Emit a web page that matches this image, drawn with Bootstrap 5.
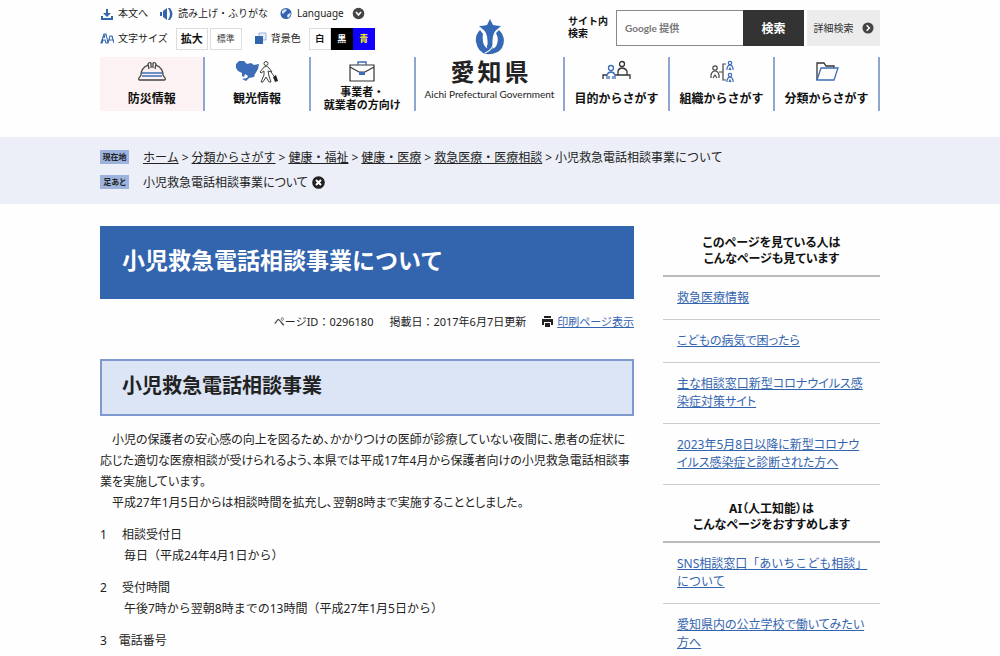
<!DOCTYPE html>
<html lang="ja">
<head>
<meta charset="utf-8">
<meta name="viewport" content="width=device-width, initial-scale=1">
<title>小児救急電話相談事業について - 愛知県</title>
<link href="https://cdn.jsdelivr.net/npm/bootstrap@5.3.0/dist/css/bootstrap.min.css" rel="stylesheet">
<script src="https://cdn.jsdelivr.net/npm/bootstrap@5.3.0/dist/js/bootstrap.bundle.min.js" defer></script>
<style>
:root{--ai:#3364ae;--line:#8fa6d2;--ink:#222}
body{font-family:"Noto Sans","Noto Sans CJK JP",sans-serif;font-size:12px;line-height:21px;color:var(--ink);background:#fefefe}
.wrap{width:100%;max-width:824px;padding:0 32px 0 12px;margin:0 auto}
a{color:inherit}
svg{flex:none;display:block}
.site-head{display:grid;grid-template-columns:316px 1fr 317px;min-height:137px}
.tools{height:57px;padding-top:3px;white-space:nowrap;font-size:10px}
.tools .line-a{height:21px}
.tools .line-b{height:29px}
.tools a{text-decoration:none}
.apart{margin-left:12px}
.size-btn{border:1px solid #ddd;background:#fff;height:22px;width:32px;padding:0;line-height:18px;font-size:9px;color:#444}
.size-btn.big{font-size:11px;font-weight:700;color:#111;margin-right:2px}
.tone{height:22px;width:22px;padding:0;border:1px solid #ddd;background:#fff;font-size:9px;line-height:18px;font-weight:700;color:#111}
.tone.black{background:#000;color:#fff;border-color:#000}
.tone.blue{background:#10f;color:#ff0;border-color:#10f}
.gnav{display:grid;grid-template-columns:repeat(3,1fr);height:54px;font-size:12px;font-weight:700;line-height:12px;color:#111}
.gnav a{text-decoration:none;border-right:2px solid var(--line);display:flex;flex-direction:column;align-items:center;justify-content:space-between;padding:3px 0 6px;white-space:nowrap;text-align:center}
.gnav a.two{padding-bottom:0;font-size:11px;line-height:13px}
.gnav a.hot{background:#fdf2f3}
.gnav.right{border-left:2px solid var(--line)}
.brand{text-decoration:none;padding-top:18px;display:flex;flex-direction:column;align-items:center;white-space:nowrap}
.brand .kanji{font-size:24px;font-weight:700;line-height:32px;display:flex;gap:3px}
.brand .latin{font-size:10px;line-height:13px;font-family:Lato,"Noto Sans",sans-serif}
.search{height:57px;padding:10px 0 11px 5px;white-space:nowrap}
.search label{font-size:10px;line-height:12px;font-weight:700;width:48px;color:#111;padding-top:5px}
.search input{border:1px solid #888;border-right:0;border-radius:0;font-size:10px;padding:0 8px;width:127px;height:36px;background:#fefefe}
.search input::placeholder{color:#777;font-family:Lato,"Noto Sans CJK JP",sans-serif;font-weight:700;opacity:1}
.search button{border:0;background:#333;color:#fff;font-weight:700;font-size:12px;width:61px;height:36px;padding:0}
.detail{background:#ececec;width:73px;height:36px;margin-left:3px;font-size:10px;text-decoration:none;color:#333}
.trail{background:#eceff7;padding:8px 0 10px;white-space:nowrap}
.trail .rowline{display:flex;align-items:center;height:24px}
.trail .rowline+.rowline{margin-top:1px;font-feature-settings:"palt"}
.crumbs{display:flex;gap:3px}
.tag{background:#9db3de;font-size:8px;line-height:14px;font-weight:700;width:29px;text-align:center;margin-right:14px;flex:none}
.cols{display:grid;grid-template-columns:minmax(0,1fr) 217px;column-gap:29px;padding-top:22px}
h1{background:var(--ai);color:#fff;font-size:23px;font-weight:700;line-height:27px;padding:21px 22px 25px;margin:0}
.meta{padding:12px 0;white-space:nowrap;font-size:11px}
.lk{color:var(--ai)}
h2{background:#dce5f5;border:2px solid #7f99cc;color:#222;font-size:20px;font-weight:700;line-height:24px;padding:13px 20px 16px;margin:15px 0 13px}
.text p{margin:0 0 11px;white-space:nowrap}
.text p.lead-in{font-feature-settings:"palt"}
.side h3{font-size:12px;line-height:16px;font-weight:700;text-align:center;padding:9px 0 8px;border-bottom:2px solid #bbb;margin:0;color:#111;font-feature-settings:"palt"}
.side ul{margin:0;font-feature-settings:"palt"}
.side li{border-bottom:1px solid #ccc;padding:12px 0 12px 14px;line-height:18px;white-space:nowrap}
.side li.full{font-feature-settings:normal}
.side ul+h3{margin-top:7px}
</style>
</head>
<body>
<header class="wrap site-head">
  <div>
    <div class="tools">
      <div class="line-a d-flex align-items-center">
        <svg class="me-1" width="14" height="14" viewBox="0 0 14 14" fill="#3364ae"><path d="M6 2h2v4h3L7 10 3 6h3zM1 9h2v2h8V9h2v4H1z"/></svg>
        <a href="#main">本文へ</a>
        <svg class="apart me-1" width="14" height="14" viewBox="0 0 14 14" fill="#3364ae"><path d="M0 5h2v4H0zM3 4l4-3v12l-4-3z"/><path d="M8 1h2q5 6 0 12H8q4-6 0-12z"/></svg>
        <a href="#">読み上げ・ふりがな</a>
        <svg class="apart me-1" width="13" height="13" viewBox="0 0 13 13"><circle cx="6" cy="6.500" r="5.500" fill="#3364ae"/><path d="M2 4l3-2 2 1-2 2-2 2-1-1zM8 7l3-1-1 3-2 2-1-2z" fill="#dbe5f6"/></svg>
        <a href="#">Language</a>
        <svg class="ms-2" width="13" height="13" viewBox="0 0 13 13"><circle cx="6.500" cy="6.500" r="5.800" fill="#444"/><path d="M4 5l2.500 3L9 5" fill="none" stroke="#fff" stroke-width="1.600"/></svg>
      </div>
      <div class="line-b d-flex align-items-center">
        <svg class="me-1" width="14" height="13" viewBox="0 0 14 13" fill="none" stroke="#3364ae" stroke-width="1.100"><path d="M1 11L4 2h2l2 9H6L5 8H3l-1 3zM8 11l2-7h2l2 7M9 8h4M4 6l1-3"/></svg>
        <span>文字サイズ</span>
        <button class="size-btn big ms-2">拡大</button>
        <button class="size-btn">標準</button>
        <svg class="apart me-1" width="13" height="13" viewBox="0 0 13 13"><path d="M5 1h7v7H5z" fill="#e8eefa" stroke="#9db3de"/><path d="M1 4h8v8H1z" fill="#3364ae"/></svg>
        <span>背景色</span>
        <button class="tone ms-2">白</button><button class="tone black">黒</button><button class="tone blue">青</button>
      </div>
    </div>
    <nav class="gnav">
      <a class="hot" href="#"><svg width="30" height="22" viewBox="0 0 30 22" fill="none" stroke="#444" stroke-width="1.300"><path d="M11 5Q4 8 4 15l-2 3q-1 2 1 2h24q2 0 1-2l-2-3q0-7-7-10M12 9L11 4q1-2 3-1v5M18 9l1-5q-1-2-3-1v5"/><path d="M5 13h20M5 16h20" stroke="#3d6cb8"/></svg>防災情報</a>
      <a href="#"><svg width="44" height="24" viewBox="0 0 44 24"><path d="M1 4L4 1 9 1 12 4 16 3 19 5 24 4 23 9 20 14 19 17 14 18 11 21 7 19 12 18 13 16 10 14 9 17 7 16 7 13 3 11 1 8z" fill="#3d6cb8"/><g fill="none" stroke="#444"><circle cx="31" cy="3.500" r="2"/><path d="M29 7Q32 5 34 8L37 12 33 11 34 16 36 22H34L31 17 28 22H26L29 15V11L26 13 25 12zM36 12L39 16"/></g><path d="M38 17l3-2 2 6-3 1z" fill="#222"/></svg>観光情報</a>
      <a class="two" href="#"><svg width="28" height="23" viewBox="0 0 28 23" fill="none" stroke="#333" stroke-width="1.200"><path d="M2 5h24v16H2zM2 7l9 5h6l9-5"/><path d="M10 5V2h8v3" stroke="#3d6cb8" stroke-width="1.400"/><path d="M11 12h6v3h-6z" fill="#3d6cb8" stroke="none"/></svg><span>事業者・<br>就業者の方向け</span></a>
    </nav>
  </div>
  <a class="brand" href="#">
    <svg width="32" height="38" viewBox="0 0 32 38"><path d="M16 1l3 6q5 1 8 1-7 5-8 14v7q0 4-6 6 1-3 0-6v-7Q12 13 5 8q4 0 8-1z" fill="#3569b5"/><path d="M6 12q-5 5-4 12 2 10 10 12 11 1 16-6 5-10-3-18l-3 3q3 6 1 11-1 4-5 5-5 1-8-4-2-5-1-11z" fill="#3569b5"/><path d="M9 12q4 4 4 11v4M23 12q-4 4-4 11v4q-1 5-8 8" fill="none" stroke="#fff" stroke-width="1.100"/></svg>
    <span class="kanji"><span>愛</span><span>知</span><span>県</span></span>
    <span class="latin">Aichi Prefectural Government</span>
  </a>
  <div>
    <form class="search d-flex">
      <label for="q">サイト内<br>検索</label>
      <input id="q" type="text" placeholder="Google 提供">
      <button type="submit">検索</button>
      <a class="detail d-flex align-items-center justify-content-center gap-2" href="#">詳細検索
        <svg width="12" height="12" viewBox="0 0 13 13"><circle cx="6.500" cy="6.500" r="6" fill="#444"/><path d="M5 3.500l3 3-3 3" fill="none" stroke="#fff" stroke-width="1.600"/></svg></a>
    </form>
    <nav class="gnav right">
      <a href="#"><svg width="30" height="22" viewBox="0 0 30 22" fill="none" stroke="#333" stroke-width="1.300"><circle cx="20" cy="4" r="2.500"/><path d="M16 15v-4q1-3 4-3t5 3v4M1 19v-4h4M13 15h15v4"/><g stroke="#3d6cb8"><circle cx="9" cy="8" r="2.500"/><path d="M5 19v-4q1-3 4-3t4 3v4M7 19v-3M11 19v-3"/></g></svg>目的からさがす</a>
      <a href="#"><svg width="26" height="24" viewBox="0 0 26 24" fill="none" stroke="#444" stroke-width="1.200"><circle cx="6" cy="8" r="2.200"/><path d="M2 18v-3q1-4 4-4t4 4v3M4 18l2-3 2 3M10 12h4M17 4h-3v16h3"/><g stroke="#3d6cb8"><circle cx="21" cy="3" r="1.700"/><path d="M18 10V8q1-3 3-3t3 3v2M20 10l1-2 1 2"/><circle cx="21" cy="15" r="1.700"/><path d="M18 22v-2q1-3 3-3t3 3v2M20 22l1-2 1 2"/></g></svg>組織からさがす</a>
      <a href="#"><svg width="24" height="23" viewBox="0 0 24 23" fill="none" stroke="#333" stroke-width="1.300"><path d="M2 20V3h7l2 3h8v2"/><path d="M2 20L6 8h17l-4 12z" stroke="#3d6cb8"/></svg>分類からさがす</a>
    </nav>
  </div>
</header>

<div class="trail">
  <div class="wrap">
    <nav class="rowline"><span class="tag">現在地</span><div class="crumbs"><a href="#">ホーム</a><span>&gt;</span><a href="#">分類からさがす</a><span>&gt;</span><a href="#">健康・福祉</a><span>&gt;</span><a href="#">健康・医療</a><span>&gt;</span><a href="#">救急医療・医療相談</a><span>&gt;</span><span>小児救急電話相談事業について</span></div></nav>
    <div class="rowline"><span class="tag">足あと</span><span>小児救急電話相談事業について</span>
      <button class="btn p-0 border-0 ms-1" aria-label="削除"><svg width="13" height="13" viewBox="0 0 13 13"><circle cx="6.500" cy="6.500" r="6.300" fill="#222"/><path d="M4 4l5 5M9 4L4 9" stroke="#fff" stroke-width="2"/></svg></button></div>
  </div>
</div>

<div class="wrap cols">
  <main id="main">
    <h1>小児救急電話相談事業について</h1>
    <div class="meta d-flex justify-content-end align-items-center"><span>ページID：0296180</span><span class="ms-3">掲載日：2017年6月7日更新</span>
      <svg class="ms-3 me-1" width="11" height="11" viewBox="0 0 11 11" fill="#222"><path d="M2 0h7v2H2zM0 3h11v6H9V6H2v3H0zM3 7h5v4H3z"/></svg><a class="lk" href="#">印刷ページ表示</a></div>
    <h2>小児救急電話相談事業</h2>
    <div class="text">
      <p class="lead-in">　小児の保護者の安心感の向上を図るため、かかりつけの医師が診療していない夜間に、患者の症状に<br>応じた適切な医療相談が受けられるよう、本県では平成17年4月から保護者向けの小児救急電話相談事<br>業を実施しています。<br>　平成27年1月5日からは相談時間を拡充し、翌朝8時まで実施することとしました。</p>
      <p>1 　相談受付日<br>　　毎日（平成24年4月1日から）</p>
      <p>2 　受付時間<br>　　午後7時から翌朝8時までの13時間（平成27年1月5日から）</p>
      <p>3　電話番号</p>
    </div>
  </main>
  <aside class="side">
    <h3>このページを見ている人は<br>こんなページも見ています</h3>
    <ul class="list-unstyled">
      <li><a class="lk" href="#">救急医療情報</a></li>
      <li><a class="lk" href="#">こどもの病気で困ったら</a></li>
      <li><a class="lk" href="#">主な相談窓口新型コロナウイルス感<br>染症対策サイト</a></li>
      <li><a class="lk" href="#">2023年5月8日以降に新型コロナウ<br>イルス感染症と診断された方へ</a></li>
    </ul>
    <h3>AI（人工知能）は<br>こんなページをおすすめします</h3>
    <ul class="list-unstyled">
      <li class="full"><a class="lk" href="#">SNS相談窓口「あいちこども相談」<br>について</a></li>
      <li><a class="lk" href="#">愛知県内の公立学校で働いてみたい<br>方へ</a></li>
    </ul>
  </aside>
</div>
</body>
</html>
